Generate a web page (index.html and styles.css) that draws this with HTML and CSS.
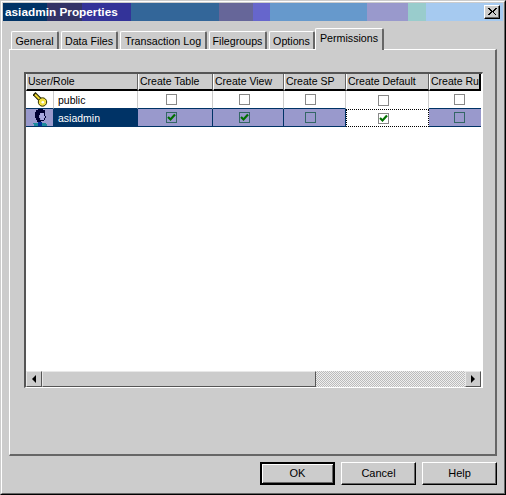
FILE: index.html
```html
<!DOCTYPE html>
<html lang="en">
<head>
<meta charset="utf-8">
<title>asiadmin Properties</title>
<link rel="stylesheet" href="styles.css">
</head>
<body>
<div class="window">
  <div class="window-inner">
    <div class="titlebar">
      <span class="band b1"></span><span class="band b2"></span><span class="band b3"></span><span class="band b4"></span><span class="band b5"></span><span class="band b6"></span><span class="band b7"></span><span class="band b8"></span><span class="band b9"></span><span class="band b10"></span>
      <span class="title-text">asiadmin Properties</span>
      <span class="close"><svg width="9" height="8" viewBox="0 0 9 8" shape-rendering="crispEdges"><path d="M0 0h2v1h1v1h1v1h1v-1h1v-1h1v-1h2v1h-1v1h-1v1h-1v1h-1v0h1v1h1v1h1v1h1v0h-2v-1h-1v-1h-1v-1h-1v1h-1v1h-1v1h-2v-1h1v-1h1v-1h1v-1h-1v-1h-1v-1h-1z" fill="#000"/></svg></span>
    </div>
    <div class="tabs">
      <div class="tab t-general">General</div>
      <div class="tab t-data">Data Files</div>
      <div class="tab t-log">Transaction Log</div>
      <div class="tab t-file">Filegroups</div>
      <div class="tab t-opt">Options</div>
      <div class="tab active t-perm">Permissions</div>
    </div>
    <div class="pane">
      <div class="grid">
        <div class="table">
          <div class="th span2">User/Role</div>
          <div class="th">Create Table</div>
          <div class="th">Create View</div>
          <div class="th">Create SP</div>
          <div class="th">Create Default</div>
          <div class="th last">Create Rule</div>

          <div class="td icon">
            <svg width="15" height="15" viewBox="0 0 15 15">
              <path d="M1 1.5 L8 8.5" stroke="#222200" stroke-width="4"/>
              <path d="M2 2.5 L8 8.5" stroke="#f0d830" stroke-width="2"/>
              <circle cx="9.5" cy="10" r="4.2" fill="#f4e040" stroke="#333300" stroke-width="1"/>
              <circle cx="9.8" cy="10.3" r="1.3" fill="#fff"/>
            </svg>
          </div>
          <div class="td name">public</div>
          <div class="td"><i class="cb"></i></div>
          <div class="td"><i class="cb"></i></div>
          <div class="td"><i class="cb"></i></div>
          <div class="td above-focus"><i class="cb"></i></div>
          <div class="td last"><i class="cb"></i></div>

          <div class="td sel icon">
            <svg width="15" height="17" viewBox="0 0 15 17" shape-rendering="crispEdges">
              <path d="M4 0h6v1h2v3h-5v2h-1v3h1v2h1v2h-4v-2h-1v-2h-1v-6h1v-2h2z" fill="#000033"/>
              <path d="M11 4h1v3h1v2h-1v2h-1v1h-3v-1h3v-2h1v-1h-1z" fill="#000033"/>
              <path d="M7 4h4v3h1v1h-1v3h-3v-2h-1z" fill="#a8a8e0"/>
              <path d="M1 14h4v-1h4v1h4v1h1v2h-13v-2h-1v-1z" fill="#1a8a9a"/>
              <path d="M5 13h4v4h-4z" fill="#003399"/>
            </svg>
          </div>
          <div class="td sel name cur">asiadmin</div>
          <div class="td sel"><i class="cb sel-cb"><svg class="check" width="9" height="9" viewBox="0 0 9 9"><path d="M1 4 L3.5 6.5 L8 1.5" fill="none" stroke="#007000" stroke-width="2.2"/></svg></i></div>
          <div class="td sel"><i class="cb sel-cb"><svg class="check" width="9" height="9" viewBox="0 0 9 9"><path d="M1 4 L3.5 6.5 L8 1.5" fill="none" stroke="#007000" stroke-width="2.2"/></svg></i></div>
          <div class="td sel"><i class="cb sel-cb"></i></div>
          <div class="td focus"><i class="cb"><svg class="check" width="9" height="9" viewBox="0 0 9 9"><path d="M1 4 L3.5 6.5 L8 1.5" fill="none" stroke="#007000" stroke-width="2.2"/></svg></i></div>
          <div class="td sel last"><i class="cb sel-cb"></i></div>
        </div>
        <div class="spacer"></div>
        <div class="scrollbar">
          <div class="sb-btn"><i class="arrow-left"></i></div>
          <div class="sb-thumb"></div>
          <div class="sb-track"></div>
          <div class="sb-btn"><i class="arrow-right"></i></div>
        </div>
      </div>
    </div>
    <div class="buttons">
      <div class="btn default"><span>OK</span></div>
      <div class="btn"><span>Cancel</span></div>
      <div class="btn"><span>Help</span></div>
    </div>
  </div>
</div>
</body>
</html>
```
FILE: styles.css
```css
* { box-sizing: border-box; }
html, body { margin: 0; padding: 0; }
body {
  width: 506px;
  height: 495px;
  overflow: hidden;
  background: #cccccc;
  font-family: "Liberation Sans", Arial, sans-serif;
  font-size: 10.5px;
  color: #000;
}
.window {
  width: 506px;
  height: 495px;
  border: 1px solid;
  border-color: #cccccc #000000 #000000 #cccccc;
}
.window-inner {
  width: 504px;
  height: 493px;
  border: 1px solid;
  border-color: #ffffff #666666 #666666 #ffffff;
  padding: 1px 1px 0 1px;
  display: flex;
  flex-direction: column;
}
.titlebar {
  height: 18px;
  width: 500px;
  display: flex;
  align-items: center;
  flex: none;
  position: relative;
}
.band { display: block; height: 18px; flex: none; }
.b1 { width: 44px; background: #003366; }
.b2 { width: 35px; background: #333366; }
.b3 { width: 49px; background: #333399; }
.b4 { width: 88px; background: #336699; }
.b5 { width: 34px; background: #666699; }
.b6 { width: 17px; background: #6666cc; }
.b7 { width: 97px; background: #6699cc; }
.b8 { width: 41px; background: #9999cc; }
.b9 { width: 18px; background: #99cccc; }
.b10 { width: 77px; background: #a6caf0; }
.title-text {
  position: absolute;
  left: 2px;
  top: 2px;
  font-size: 11.8px;
  line-height: 15px;
  font-weight: bold;
  color: #fff;
  white-space: nowrap;
}
.close {
  position: absolute;
  right: 3px;
  top: 2px;
  width: 16px;
  height: 14px;
  background: #cccccc;
  border: 1px solid;
  border-color: #ffffff #000000 #000000 #ffffff;
  box-shadow: inset -1px -1px 0 #666666;
  display: flex;
  align-items: center;
  justify-content: center;
}
.tabs {
  display: flex;
  align-items: flex-end;
  height: 21px;
  margin: 7px 0 0 6px;
  padding-left: 2px;
  flex: none;
  position: relative;
  z-index: 1;
}
.tab {
  height: 18px;
  line-height: 18px;
  text-align: center;
  background: #cccccc;
  border: solid;
  border-width: 1px 2px 0 1px;
  border-color: #ffffff #666666 #ffffff #ffffff;
  border-radius: 2px 2px 0 0;
  margin-right: 2px;
  white-space: nowrap;
  flex: none;
  font-size: 10.7px;
}
.t-general { width: 48px; }
.t-data { width: 57px; }
.t-log { width: 87px; }
.t-file { width: 58px; margin-right: 2px; }
.t-opt { width: 46px; margin-right: 0; }
.t-perm { width: 69px; }
.tab.active {
  height: 22px;
  line-height: 19px;
  margin-bottom: -1px;
  padding-bottom: 2px;
}
.pane {
  width: 488px;
  height: 407px;
  margin-left: 6px;
  flex: none;
  border: 1px solid;
  border-width: 1px 2px 2px 1px;
  border-color: #ffffff #666666 #666666 #ffffff;
  padding: 22px 0 0 14px;
}
.grid {
  width: 459px;
  height: 316px;
  background: #fff;
  border: solid;
  border-width: 2px 1px 1px 2px;
  border-color: #555555 #ffffff #ffffff #555555;
  display: flex;
  flex-direction: column;
}
.table {
  display: grid;
  grid-template-columns: 28px 84px 75px 71px 62px 83px 52px;
  grid-template-rows: 17px 18px 18px;
  flex: none;
  width: 455px;
  overflow: hidden;
}
.th {
  background: #cccccc;
  border: solid;
  border-width: 0 1px 2px 1px;
  border-color: #ffffff #666666 #000000 #ffffff;
  padding-left: 1px;
  line-height: 14px;
  white-space: nowrap;
  overflow: hidden;
}
.th.span2 { grid-column: span 2; padding-left: 1px; }
.th.last { border-right: 2px solid #000; }
.td {
  display: flex;
  align-items: center;
  justify-content: center;
  padding-right: 8px;
  background: #fff;
  border-right: 1px solid #cccccc;
  border-bottom: 1px solid #003366;
}
.td.last { border-right: 0; padding-right: 0; padding-left: 8px; }
.td.above-focus { border-bottom: 0; }
.td.icon { justify-content: flex-start; padding: 0 0 0 7px; }
.td.name {
  justify-content: flex-start;
  padding: 0 0 0 4px;
}
.td.sel {
  background: #9999cc;
  border-right: 1px solid #003366;
}
.td.sel.last { border-right: 0; }
.td.sel.cur {
  background: #003366;
  color: #fff;
}
.td.focus {
  background: #fff;
  border: 1px dotted #000;
}
.cb {
  display: flex;
  align-items: center;
  justify-content: center;
  width: 11px;
  height: 11px;
  border: 1px solid #888888;
  background: #fff;
}
.cb.sel-cb {
  background: #9999cc;
  border-color: #336666;
}
.spacer { flex: 1; }
.scrollbar {
  height: 16px;
  width: 455px;
  display: flex;
  flex: none;
}
.sb-btn, .sb-thumb {
  height: 16px;
  background: #cccccc;
  border: 1px solid;
  border-color: #e8e8e8 #555555 #555555 #e8e8e8;
  display: flex;
  align-items: center;
  justify-content: center;
  flex: none;
}
.sb-btn { width: 16px; }
.sb-thumb { width: 274px; margin-left: 0; }
.sb-track {
  flex: 1;
  background-color: #fff;
  background-image: conic-gradient(#bbbbbb 25%, #eeeeee 0 50%, #bbbbbb 0 75%, #eeeeee 0);
  background-size: 2px 2px;
}
.arrow-left {
  width: 0; height: 0;
  border-style: solid;
  border-width: 4px 4px 4px 0;
  border-color: transparent #000 transparent transparent;
}
.arrow-right {
  width: 0; height: 0;
  border-style: solid;
  border-width: 4px 0 4px 4px;
  border-color: transparent transparent transparent #000;
}
.buttons {
  display: flex;
  justify-content: flex-end;
  gap: 6px;
  padding: 6px 6px 0 0;
  width: 500px;
  flex: none;
}
.btn {
  width: 75px;
  height: 23px;
  padding-bottom: 2px;
  background: #cccccc;
  border: 1px solid;
  border-color: #ffffff #000000 #000000 #ffffff;
  box-shadow: inset -1px -1px 0 #666666;
  display: flex;
  align-items: center;
  justify-content: center;
  font-size: 11px;
}
.btn.default {
  border: 2px solid;
  border-color: #000;
  box-shadow: inset 1px 1px 0 #fff, inset -1px -1px 0 #666666;
}
```
